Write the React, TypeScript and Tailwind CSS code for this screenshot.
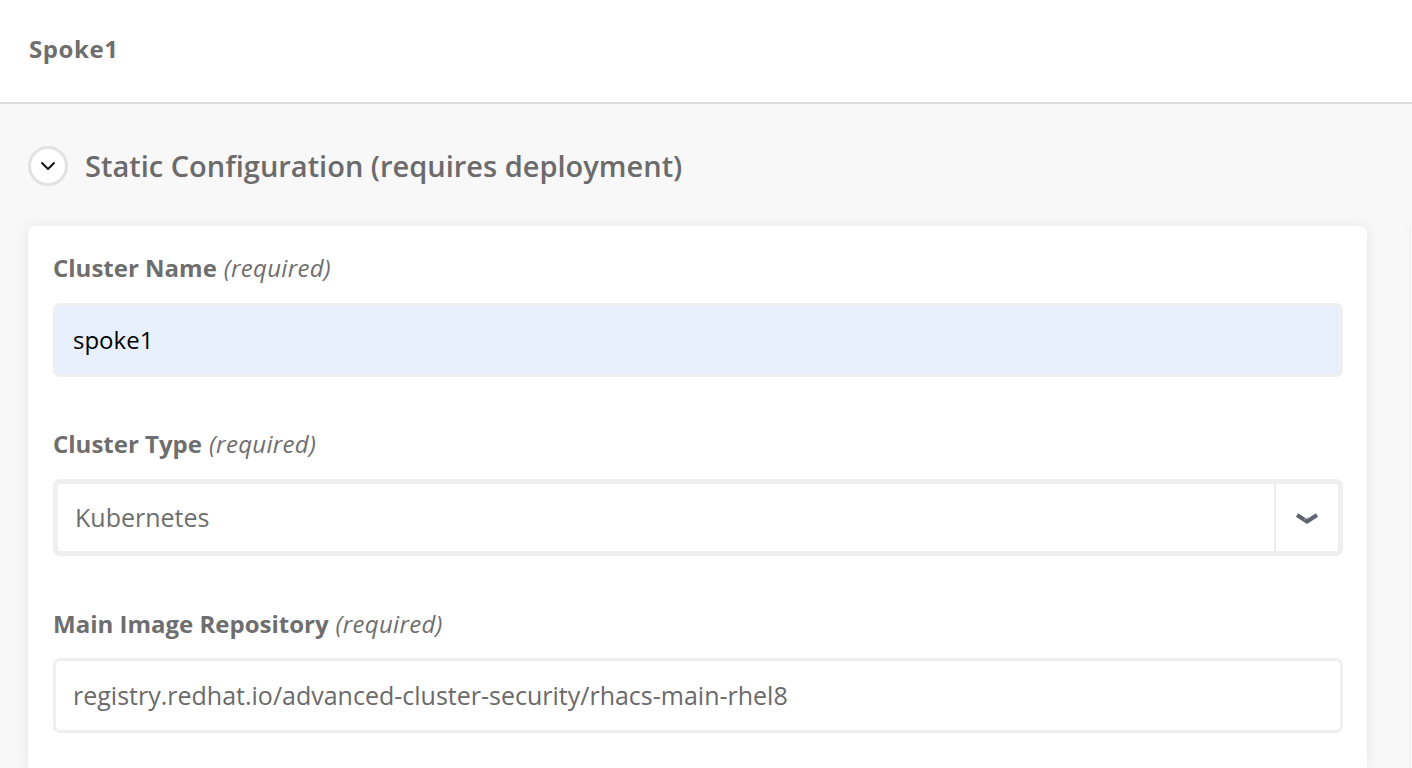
import React from "react";

const font = { fontFamily: '"Open Sans", "Noto Sans", sans-serif' };

function Label({ name }: { name: string }) {
  return (
    <div className="h-[28px] flex items-center text-[24px] leading-[28px] text-[#6e6e6e]">
      <span className="font-bold">{name}</span>
      <span className="italic font-normal ml-[7px] tracking-[0.3px]">(required)</span>
    </div>
  );
}

export default function App() {
  return (
    <div style={font} className="w-[1412px] h-[768px] overflow-hidden bg-[#f8f8f8] flex flex-col">
      <header className="h-[104px] shrink-0 bg-white border-b-2 border-[#dcdcdc] flex items-center pl-[29px] pb-[4px]">
        <span className="text-[24px] font-bold tracking-[0.6px] text-[#6e6e6e]">Spoke1</span>
      </header>
      <div className="flex flex-1 min-h-0">
        <main className="w-[1339px] ml-[28px] shrink-0 flex flex-col">
          <div className="h-[122px] flex items-center pt-[2px]">
            <button className="w-[40px] h-[40px] rounded-full bg-white border-[3px] border-[#e2e2e2] flex items-center justify-center">
              <svg width="16" height="10" viewBox="0 0 16 10" fill="none">
                <path d="M2 2 L8 8 L14 2" stroke="#111" strokeWidth="2" strokeLinecap="round" strokeLinejoin="round" />
              </svg>
            </button>
            <h1 className="ml-[17px] text-[29px] font-semibold text-[#6b6b6b]">
              Static Configuration (requires deployment)
            </h1>
          </div>
          <section className="flex-1 bg-white rounded-t-[7px] shadow-[0_0_14px_rgba(0,0,0,0.08)] pl-[25px] pr-[24px] pt-[28px]">
            <Label name="Cluster Name" />
            <div className="mt-[21px] h-[74px] rounded-[7px] border-[3px] border-[#efefef] bg-[#e8f0fe] flex items-center pl-[17px] text-[24px] text-black">
              spoke1
            </div>
            <div className="mt-[53px]">
              <Label name="Cluster Type" />
            </div>
            <div className="mt-[21px] h-[77px] rounded-[7px] border-[5px] border-[#efefef] bg-white flex items-stretch">
              <div className="flex-1 flex items-center pl-[17px] text-[25px] text-[#6e6e6e]">Kubernetes</div>
              <div className="w-[64px] border-l-2 border-[#ececec] flex items-center justify-center">
                <svg width="26" height="12" viewBox="0 0 26 12" fill="none">
                  <path d="M3 3 L13 9.5 L23 3" stroke="#5f6470" strokeWidth="4" strokeLinecap="butt" strokeLinejoin="miter" />
                  <path d="M10 8 L14.5 5" stroke="#9aa0aa" strokeWidth="0.8" />
                </svg>
              </div>
            </div>
            <div className="mt-[54px]">
              <Label name="Main Image Repository" />
            </div>
            <div className="mt-[20px] h-[75px] rounded-[7px] border-[3px] border-[#efefef] bg-white flex items-center pl-[17px] text-[25px] text-[#6a6a6a]">
              registry.redhat.io/advanced-cluster-security/rhacs-main-rhel8
            </div>
          </section>
        </main>
        <div className="flex-1" />
        <div className="w-[2px] mt-[122px] bg-white border-l border-[#ececec] shadow-[0_0_10px_rgba(0,0,0,0.06)]" />
      </div>
    </div>
  );
}
